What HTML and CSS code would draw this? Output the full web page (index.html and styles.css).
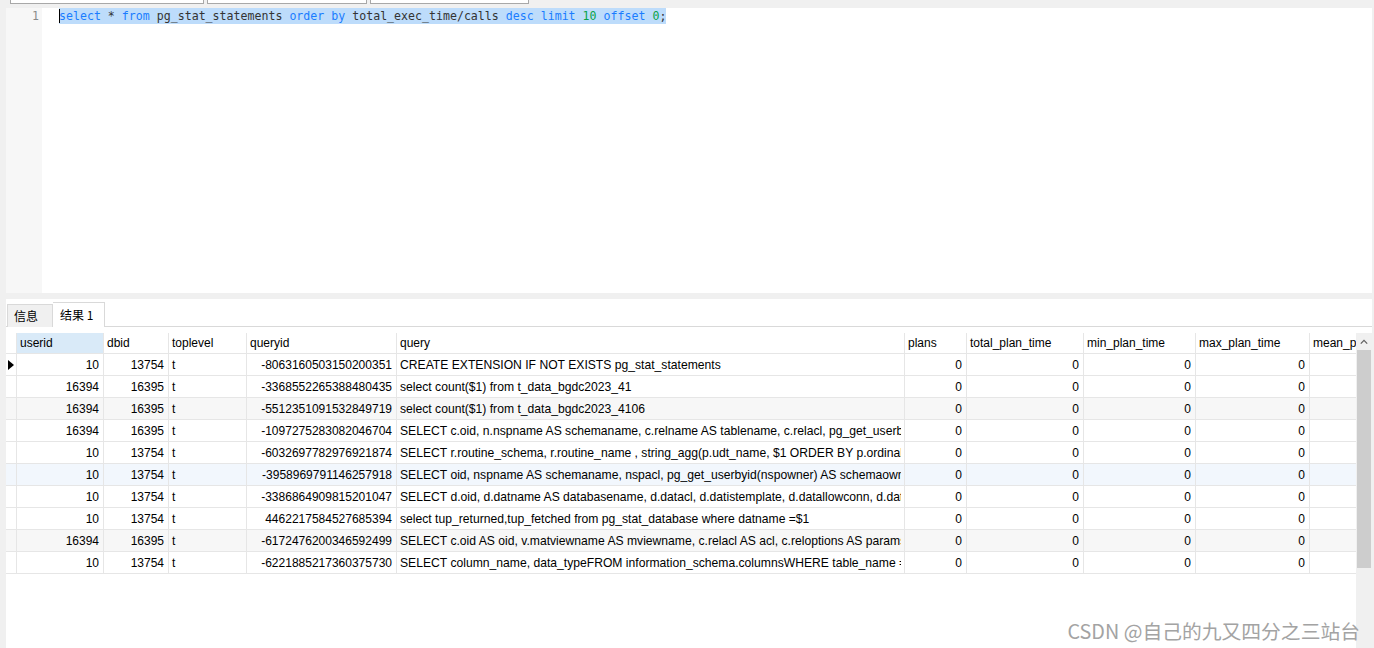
FILE: index.html
```html
<!DOCTYPE html>
<html lang="zh-CN">
<head>
  <meta charset="UTF-8" />
  <meta name="viewport" content="width=device-width, initial-scale=1.0" />
  <title>查询 - pg_stat_statements</title>
  <link rel="stylesheet" href="styles.css">
</head>
<body>
  <div class="toolbar">
    <span class="combo combo-a"></span>
    <span class="combo combo-b"></span>
    <span class="combo combo-c"></span>
  </div>

  <div class="window">
    <div class="editor">
      <div class="gutter"><div class="ln">1</div></div>
      <div class="code">
        <div class="line"><span class="caret"></span><span class="kw">select</span> * <span class="kw">from</span> pg_stat_statements <span class="kw">order</span> <span class="kw">by</span> total_exec_time/calls <span class="kw">desc</span> <span class="kw">limit</span> <span class="num">10</span> <span class="kw">offset</span> <span class="num">0</span>;</div>
      </div>
    </div>

    <div class="splitter"></div>

    <div class="tabs">
      <div class="tab">信息</div>
      <div class="tab active">结果 1</div>
    </div>

    <div class="results">
      <div class="grid-view">
        <table class="grid">
          <colgroup>
            <col style="width:11px"><col style="width:87px"><col style="width:65px"><col style="width:78px">
            <col style="width:150px"><col style="width:508px"><col style="width:62px"><col style="width:117px">
            <col style="width:112px"><col style="width:114px"><col style="width:120px">
          </colgroup>
          <thead>
            <tr>
              <th class="ind"></th>
              <th class="cur">userid</th>
              <th>dbid</th>
              <th>toplevel</th>
              <th>queryid</th>
              <th>query</th>
              <th>plans</th>
              <th>total_plan_time</th>
              <th>min_plan_time</th>
              <th>max_plan_time</th>
              <th>mean_plan_time</th>
            </tr>
          </thead>
          <tbody>
            <tr>
              <td class="ind"><span class="marker"></span></td>
              <td class="n">10</td><td class="n">13754</td><td>t</td><td class="n">-8063160503150200351</td>
              <td><div class="q">CREATE EXTENSION IF NOT EXISTS pg_stat_statements</div></td>
              <td class="n">0</td><td class="n">0</td><td class="n">0</td><td class="n">0</td><td></td>
            </tr>
            <tr>
              <td class="ind"></td>
              <td class="n">16394</td><td class="n">16395</td><td>t</td><td class="n">-3368552265388480435</td>
              <td><div class="q">select count($1) from t_data_bgdc2023_41</div></td>
              <td class="n">0</td><td class="n">0</td><td class="n">0</td><td class="n">0</td><td></td>
            </tr>
            <tr class="alt">
              <td class="ind"></td>
              <td class="n">16394</td><td class="n">16395</td><td>t</td><td class="n">-5512351091532849719</td>
              <td><div class="q">select count($1) from t_data_bgdc2023_4106</div></td>
              <td class="n">0</td><td class="n">0</td><td class="n">0</td><td class="n">0</td><td></td>
            </tr>
            <tr>
              <td class="ind"></td>
              <td class="n">16394</td><td class="n">16395</td><td>t</td><td class="n">-1097275283082046704</td>
              <td><div class="q">SELECT c.oid, n.nspname AS schemaname, c.relname AS tablename, c.relacl, pg_get_userbyid(c.relowner) AS tableowner</div></td>
              <td class="n">0</td><td class="n">0</td><td class="n">0</td><td class="n">0</td><td></td>
            </tr>
            <tr>
              <td class="ind"></td>
              <td class="n">10</td><td class="n">13754</td><td>t</td><td class="n">-6032697782976921874</td>
              <td><div class="q">SELECT r.routine_schema, r.routine_name , string_agg(p.udt_name, $1 ORDER BY p.ordinal_position)</div></td>
              <td class="n">0</td><td class="n">0</td><td class="n">0</td><td class="n">0</td><td></td>
            </tr>
            <tr class="hover">
              <td class="ind"></td>
              <td class="n">10</td><td class="n">13754</td><td>t</td><td class="n">-3958969791146257918</td>
              <td><div class="q">SELECT oid, nspname AS schemaname, nspacl, pg_get_userbyid(nspowner) AS schemaowner</div></td>
              <td class="n">0</td><td class="n">0</td><td class="n">0</td><td class="n">0</td><td></td>
            </tr>
            <tr>
              <td class="ind"></td>
              <td class="n">10</td><td class="n">13754</td><td>t</td><td class="n">-3386864909815201047</td>
              <td><div class="q">SELECT d.oid, d.datname AS databasename, d.datacl, d.datistemplate, d.datallowconn, d.datconnlimit</div></td>
              <td class="n">0</td><td class="n">0</td><td class="n">0</td><td class="n">0</td><td></td>
            </tr>
            <tr>
              <td class="ind"></td>
              <td class="n">10</td><td class="n">13754</td><td>t</td><td class="n">4462217584527685394</td>
              <td><div class="q">select tup_returned,tup_fetched from pg_stat_database where datname =$1</div></td>
              <td class="n">0</td><td class="n">0</td><td class="n">0</td><td class="n">0</td><td></td>
            </tr>
            <tr class="alt">
              <td class="ind"></td>
              <td class="n">16394</td><td class="n">16395</td><td>t</td><td class="n">-6172476200346592499</td>
              <td><div class="q">SELECT c.oid AS oid, v.matviewname AS mviewname, c.relacl AS acl, c.reloptions AS params</div></td>
              <td class="n">0</td><td class="n">0</td><td class="n">0</td><td class="n">0</td><td></td>
            </tr>
            <tr>
              <td class="ind"></td>
              <td class="n">10</td><td class="n">13754</td><td>t</td><td class="n">-6221885217360375730</td>
              <td><div class="q">SELECT column_name, data_typeFROM information_schema.columnsWHERE table_name = $1</div></td>
              <td class="n">0</td><td class="n">0</td><td class="n">0</td><td class="n">0</td><td></td>
            </tr>
          </tbody>
        </table>
      </div>
      <div class="vscroll">
        <div class="arrow">
          <svg viewBox="0 0 10 6"><path d="M1 5 L5 1 L9 5" /></svg>
        </div>
        <div class="thumb"></div>
      </div>
    </div>
  </div>

  <div class="watermark">CSDN @自己的九又四分之三站台</div>
</body>
</html>
```

FILE: styles.css
```css
*, *::before, *::after {
  box-sizing: border-box;
  margin: 0;
  padding: 0;
}

body {
  width: 1374px;
  height: 648px;
  overflow: hidden;
  background-color: #ffffff;
  color: #000000;
  font-family: "Liberation Sans", Arial, "Noto Sans CJK SC", sans-serif;
  font-size: 12px;
  position: relative;
}

/* top strip with the clipped combo boxes */
.toolbar {
  height: 8px;
  background-color: #f0f0f0;
  display: flex;
  gap: 3px;
  padding-left: 10px;
}

.combo {
  height: 4px;
  background-color: #ffffff;
  border: 1px solid #a8a8a8;
  border-top: none;
}

.combo-a { width: 194px; }
.combo-b { width: 160px; }
.combo-c { width: 159px; }

.window {
  height: 640px;
  border-left: 6px solid #f0f0f0;
  border-right: 2px solid #f0f0f0;
  display: flex;
  flex-direction: column;
}

/* sql editor */
.editor {
  height: 285px;
  display: flex;
}

.gutter {
  width: 36px;
  background-color: #f7f7f7;
}

.ln {
  height: 16px;
  line-height: 16px;
  text-align: right;
  padding-right: 3px;
  color: #8a8a8a;
  font-family: "DejaVu Sans Mono", "Liberation Mono", monospace;
  font-size: 11.6px;
}

.code {
  flex: 1;
  padding-left: 17px;
  font-family: "DejaVu Sans Mono", "Liberation Mono", monospace;
  font-size: 11.6px;
  color: #333333;
}

.line {
  display: inline-block;
  height: 16px;
  line-height: 16px;
  background-color: #bddcfb;
  white-space: pre;
  position: relative;
}

.caret {
  position: absolute;
  left: 0;
  top: 1px;
  width: 1px;
  height: 14px;
  background-color: #000000;
}

.kw { color: #1a7cff; }
.num { color: #0aa34a; }

.splitter {
  height: 6px;
  background-color: #f0f0f0;
}

/* result tabs */
.tabs {
  margin-top: 3px;
  height: 25px;
  display: flex;
  align-items: flex-end;
  padding-left: 1px;
  border-bottom: 1px solid #d9d9d9;
  font-family: "Noto Sans CJK SC", "Liberation Sans", sans-serif;
  font-size: 12px;
}

.tab {
  height: 23px;
  line-height: 22px;
  width: 46px;
  padding-left: 6px;
  background-color: #f0f0f0;
  border: 1px solid #d9d9d9;
  border-bottom: none;
  margin-bottom: -1px;
  color: #000000;
}

.tab.active {
  height: 25px;
  line-height: 24px;
  width: 52px;
  padding-left: 7px;
  background-color: #ffffff;
  border-left: none;
}

/* grid */
.results {
  flex: 1;
  margin-top: 6px;
  display: flex;
  min-height: 0;
}

.grid-view {
  flex: 1;
  overflow: hidden;
}

.grid {
  table-layout: fixed;
  width: 1424px;
  border-collapse: separate;
  border-spacing: 0;
}

.grid th,
.grid td {
  border-right: 1px solid #e6e6e6;
  border-bottom: 1px solid #e6e6e6;
  white-space: nowrap;
  overflow: hidden;
  padding: 0 3px;
  text-align: left;
  font-weight: normal;
}

.grid th {
  line-height: 19px;
  padding-top: 1px;
  color: #000000;
}

.grid th.cur {
  background-color: #d9eaf8;
}

.grid td {
  line-height: 20px;
  padding-top: 1px;
}

.grid td.n {
  text-align: right;
  padding-right: 4px;
}

.grid .ind {
  padding: 0;
}

.q {
  overflow: hidden;
  font-size: 12.15px;
}

.grid tr.alt td { background-color: #f7f7f7; }
.grid tr.hover td { background-color: #f2f7fd; }

.marker {
  display: block;
  width: 0;
  height: 0;
  margin-left: 2px;
  border-top: 5px solid transparent;
  border-bottom: 5px solid transparent;
  border-left: 6px solid #000000;
}

.vscroll {
  width: 16px;
  background-color: #f0f0f0;
  display: flex;
  flex-direction: column;
}

.arrow {
  height: 17px;
  display: flex;
  align-items: center;
  justify-content: center;
}

.arrow svg {
  width: 8px;
  height: 6px;
  fill: none;
  stroke: #606060;
  stroke-width: 1.6;
}

.thumb {
  margin: 0 1px;
  height: 218px;
  background-color: #cdcdcd;
}

.watermark {
  position: absolute;
  right: 14px;
  top: 616px;
  font-family: "Noto Sans CJK SC", "Liberation Sans", sans-serif;
  font-size: 19.8px;
  color: #a3a3a3;
  text-shadow: 0 0 1px #ffffff;
}
```
